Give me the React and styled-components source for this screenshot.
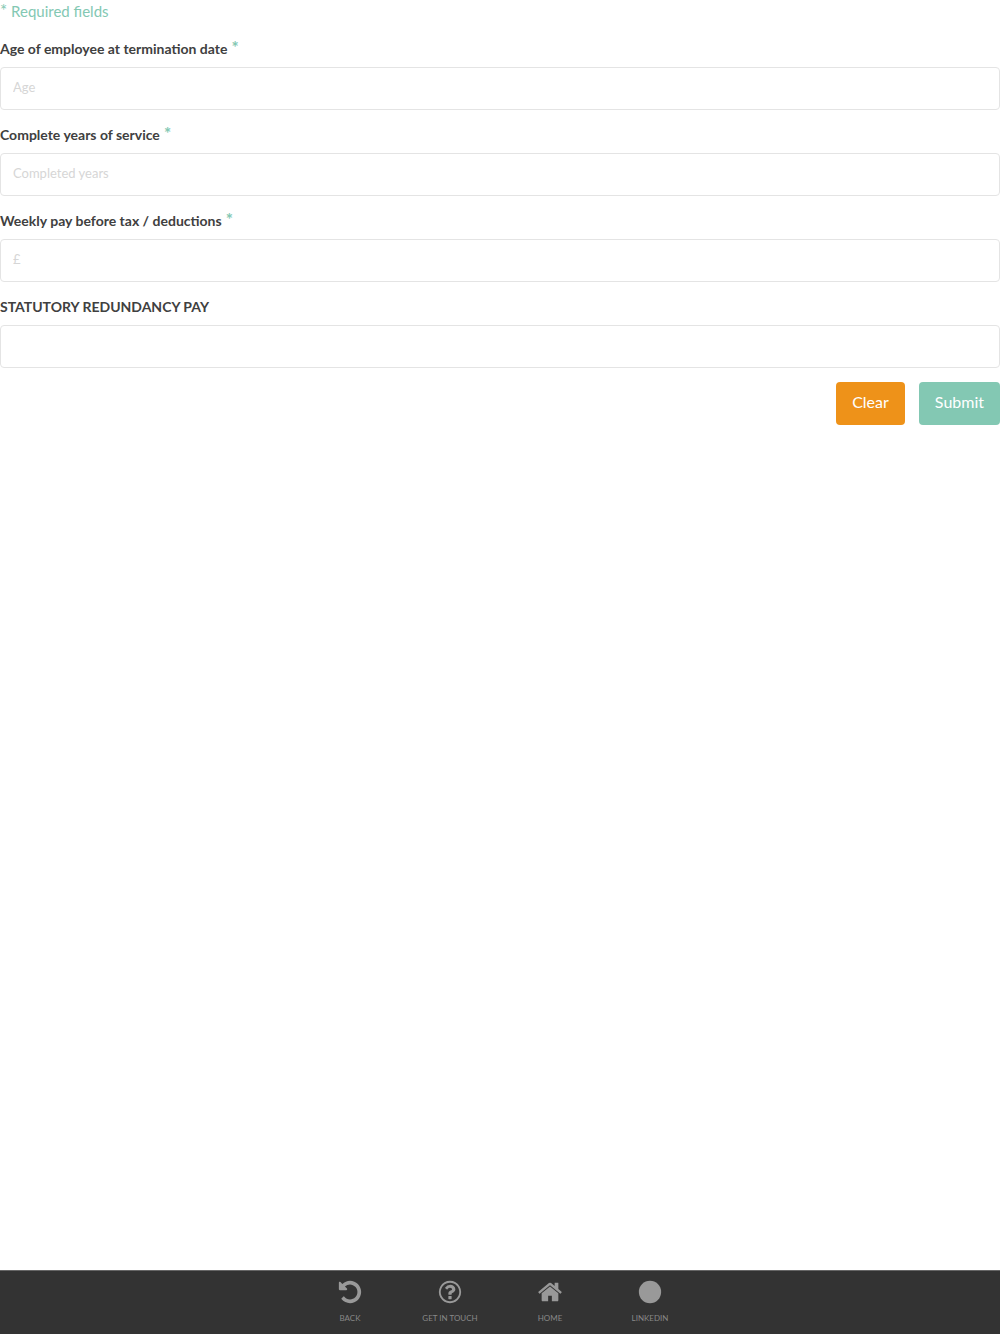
import * as React from 'react'
import styled, { createGlobalStyle } from 'styled-components'

const fields = [
    { id: 'age', label: 'Age of employee at termination date', placeholder: 'Age', required: true },
    { id: 'years', label: 'Complete years of service', placeholder: 'Completed years', required: true },
    { id: 'pay', label: 'Weekly pay before tax / deductions', placeholder: '£', required: true },
    { id: 'result', label: 'STATUTORY REDUNDANCY PAY', readOnly: true },
]

const links = [
    {
        label: 'BACK',
        path: 'M1664 896q0 156-61 298t-164 245-245 164-298 61q-172 0-327-72.5t-264-204.5q-7-10-6.5-22.5t8.5-20.5l137-138q10-9 25-9 16 2 23 12 73 95 179 147t225 52q104 0 198.5-40.5t163.5-109.5 109.5-163.5 40.5-198.5-40.5-198.5-109.5-163.5-163.5-109.5-198.5-40.5q-98 0-188 35.5t-160 101.5l137 138q31 30 14 69-17 40-59 40h-448q-26 0-45-19t-19-45v-448q0-42 40-59 39-17 69 14l130 129q107-101 244.5-156.5t284.5-55.5q156 0 298 61t245 164 164 245 61 298z',
    },
    {
        label: 'GET IN TOUCH',
        path: 'M1008 1200v160q0 14-9 23t-23 9h-160q-14 0-23-9t-9-23v-160q0-14 9-23t23-9h160q14 0 23 9t9 23zm256-496q0 50-15 90t-45.5 69-52 44-59.5 36q-32 18-46.5 28t-26 24-11.5 29v32q0 14-9 23t-23 9h-160q-14 0-23-9t-9-23v-68q0-35 10.5-64.5t24-47.5 39-35.5 41-25.5 44.5-21q53-25 75-43t22-49q0-42-43.5-71.5t-95.5-29.5q-56 0-95 27-29 20-80 83-9 12-25 12-11 0-19-6l-108-82q-10-7-12-20t5-23q122-192 349-192 129 0 238.5 89.5t109.5 214.5zm-368-448q-130 0-248.5 51t-204 136.5-136.5 204-51 248.5 51 248.5 136.5 204 204 136.5 248.5 51 248.5-51 204-136.5 136.5-204 51-248.5-51-248.5-136.5-204-204-136.5-248.5-51zm768 640q0 209-103 385.5t-279.5 279.5-385.5 103-385.5-103-279.5-279.5-103-385.5 103-385.5 279.5-279.5 385.5-103 385.5 103 279.5 279.5 103 385.5z',
    },
    {
        label: 'HOME',
        path: 'M1472 992v480q0 26-19 45t-45 19h-384v-384h-256v384h-384q-26 0-45-19t-19-45v-480q0-1 .5-3t.5-3l575-474 575 474q1 2 1 6zm223-69l-62 74q-8 9-21 11h-3q-13 0-21-7l-692-577-692 577q-12 8-24 7-13-2-21-11l-62-74q-8-10-7-23.5t11-21.5l719-599q32-26 76-26t76 26l244 204v-195q0-14 9-23t23-9h192q14 0 23 9t9 23v408l219 182q10 8 11 21.5t-7 23.5z',
    },
    {
        label: 'LINKEDIN',
        path: 'M1664 896a768 768 0 1 1-1536 0a768 768 0 1 1 1536 0z',
    },
]

const App = () => {
    return (
        <Page>
            <GlobalStyle />
            <Form onSubmit={e => e.preventDefault()}>
                <Note><Star>*</Star> Required fields</Note>
                {fields.map(({ id, label, placeholder, required, readOnly }) => (
                    <Field key={id}>
                        <Label htmlFor={id}>{label}{required && <Star> *</Star>}</Label>
                        <Input id={id} type="text" placeholder={placeholder} readOnly={readOnly} />
                    </Field>
                ))}
                <Actions>
                    <Button type="reset">Clear</Button>
                    <Button type="submit" $primary>Submit</Button>
                </Actions>
            </Form>
            <Footer>
                {links.map(({ label, path }) => (
                    <FooterLink href="#" key={label}>
                        <Icon viewBox="0 0 1792 1792" aria-hidden="true"><path d={path} /></Icon>
                        {label}
                    </FooterLink>
                ))}
            </Footer>
        </Page>
    )
}

export default App

const GlobalStyle = createGlobalStyle`
    * {
        box-sizing: border-box;
    }

    body {
        margin: 0;
        background: #fff;
        color: #404040;
        font-family: Lato, sans-serif;
        font-size: 14px;
    }
`

const Page = styled.div`
    display: flex;
    flex-direction: column;
    min-height: 100vh;
`

const Form = styled.form`
    flex: 1;
`

const Note = styled.p`
    margin: 0 0 16px;
    font-size: 15px;
    line-height: 22px;
    color: #83c8b3;
`

const Field = styled.div`
    margin-bottom: 14px;
`

const Label = styled.label`
    display: block;
    margin-bottom: 7px;
    line-height: 22px;
    font-weight: 700;
`

const Star = styled.span`
    font-size: 17px;
    line-height: 1;
    color: #83c8b3;
`

const Input = styled.input`
    display: block;
    width: 100%;
    height: 43px;
    padding: 0 12px 4px;
    border: 1px solid #e4e4e4;
    border-radius: 4px;
    background: #fff;
    color: #404040;
    font: inherit;

    &::placeholder {
        font-size: 13px;
        color: #d6d6d6;
        opacity: 1;
    }
`

const Actions = styled.div`
    display: flex;
    justify-content: flex-end;
    gap: 14px;
`

const Button = styled.button`
    height: 43px;
    padding: 0 16px 4px;
    border: 0;
    border-radius: 4px;
    background: ${props => props.$primary ? '#83c8b3' : '#ee9219'};
    color: #fff;
    font: inherit;
    font-size: 16px;
`

const Footer = styled.footer`
    display: flex;
    justify-content: center;
    height: 64px;
    border-top: 1px solid #666;
    background: #333;
`

const FooterLink = styled.a`
    display: flex;
    flex-direction: column;
    align-items: center;
    width: 100px;
    padding-top: 8px;
    font-size: 8px;
    line-height: 12px;
    color: #888;
    text-decoration: none;
`

const Icon = styled.svg`
    width: 26px;
    height: 26px;
    margin-bottom: 7px;
    fill: #999;
`
